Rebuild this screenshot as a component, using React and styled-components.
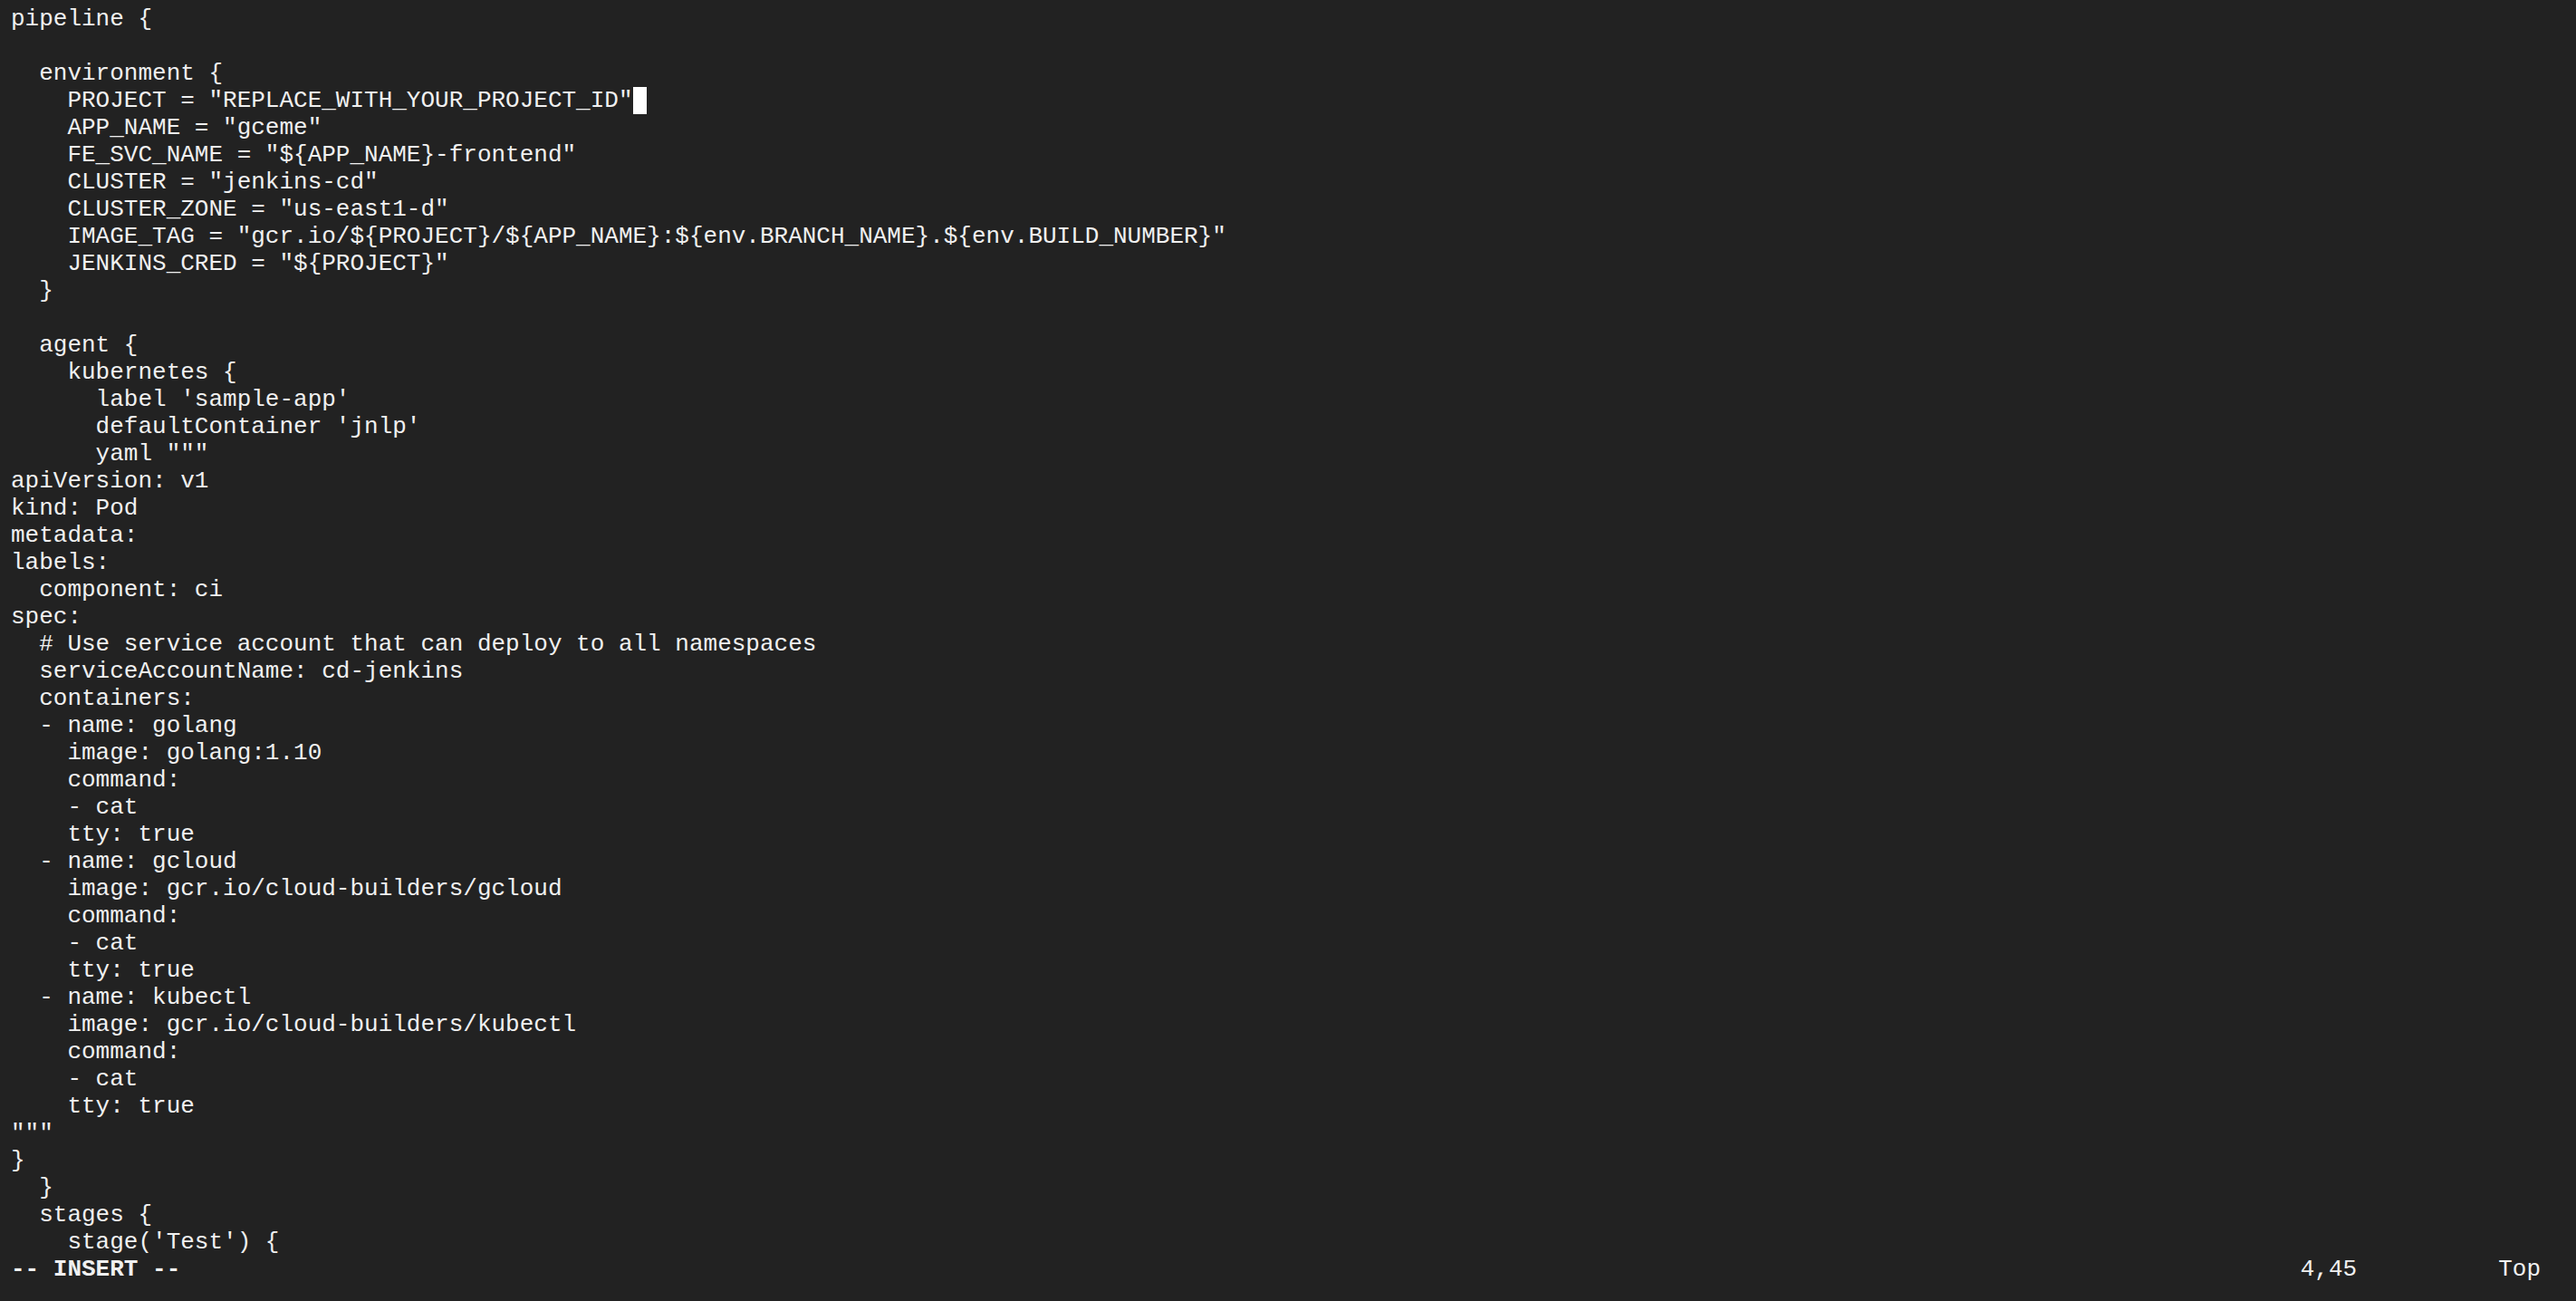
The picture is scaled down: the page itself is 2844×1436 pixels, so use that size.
import React from 'react';
import styled, { createGlobalStyle } from 'styled-components';

const Global = createGlobalStyle`
  html, body {
    margin: 0;
    padding: 0;
    background: #222222;
    overflow: hidden;
  }
`;

const Terminal = styled.div`
  box-sizing: border-box;
  width: 100vw;
  height: 100vh;
  padding: 6px 0 0 12px;
  background: #222222;
  color: #f0f0f0;
  font-family: "Liberation Mono", "Courier New", monospace;
  font-size: 26px;
  line-height: 30px;
  display: flex;
  flex-direction: column;
`;

const Line = styled.div`
  height: 30px;
  white-space: pre;
`;

const Cursor = styled.span`
  display: inline-block;
  width: 1ch;
  height: 30px;
  vertical-align: top;
  background: #ffffff;
`;

const StatusBar = styled.div`
  height: 30px;
  display: flex;
  justify-content: space-between;
  white-space: pre;
  padding-right: 39px;
`;

const Mode = styled.span`
  font-weight: 700;
`;

// file contents as shown in the buffer (first 46 lines)
const lines = [
  'pipeline {',
  '',
  '  environment {',
  '    PROJECT = "REPLACE_WITH_YOUR_PROJECT_ID"',
  '    APP_NAME = "gceme"',
  '    FE_SVC_NAME = "${APP_NAME}-frontend"',
  '    CLUSTER = "jenkins-cd"',
  '    CLUSTER_ZONE = "us-east1-d"',
  '    IMAGE_TAG = "gcr.io/${PROJECT}/${APP_NAME}:${env.BRANCH_NAME}.${env.BUILD_NUMBER}"',
  '    JENKINS_CRED = "${PROJECT}"',
  '  }',
  '',
  '  agent {',
  '    kubernetes {',
  "      label 'sample-app'",
  "      defaultContainer 'jnlp'",
  '      yaml """',
  'apiVersion: v1',
  'kind: Pod',
  'metadata:',
  'labels:',
  '  component: ci',
  'spec:',
  '  # Use service account that can deploy to all namespaces',
  '  serviceAccountName: cd-jenkins',
  '  containers:',
  '  - name: golang',
  '    image: golang:1.10',
  '    command:',
  '    - cat',
  '    tty: true',
  '  - name: gcloud',
  '    image: gcr.io/cloud-builders/gcloud',
  '    command:',
  '    - cat',
  '    tty: true',
  '  - name: kubectl',
  '    image: gcr.io/cloud-builders/kubectl',
  '    command:',
  '    - cat',
  '    tty: true',
  '"""',
  '}',
  '  }',
  '  stages {',
  "    stage('Test') {",
];

const cursorRow = 3;

export default function App() {
  return (
    <>
      <Global />
      <Terminal>
        {lines.map((text, i) => (
          <Line key={i}>
            {text}
            {i === cursorRow && <Cursor />}
          </Line>
        ))}
        <StatusBar>
          <Mode>-- INSERT --</Mode>
          <span>{'4,45          Top'}</span>
        </StatusBar>
      </Terminal>
    </>
  );
}
